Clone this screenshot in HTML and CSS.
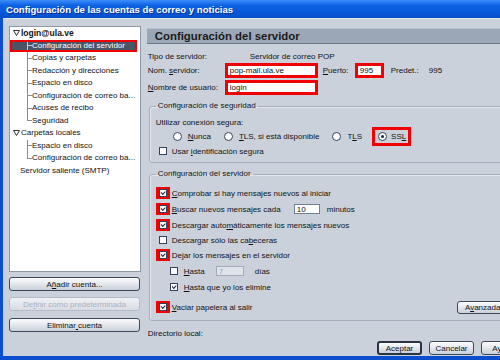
FILE: index.html
```html
<!DOCTYPE html>
<html>
<head>
  <title>Configuración de las cuentas de correo y noticias</title>
  <link rel="stylesheet" href="styles.css">
</head>
<body>
  <div class="window">
    <div class="titlebar">Configuración de las cuentas de correo y noticias</div>
    <div class="body">
      <div class="sidebar">
        <div class="tree">
          <div class="node root"><svg class="twisty" width="7" height="6"><polygon points="0.5,0.5 6.5,0.5 3.5,5.5" fill="#fff" stroke="#333"/></svg>login@ula.ve</div>
          <div class="leaf selected">Configuración del servidor</div>
          <div class="leaf">Copias y carpetas</div>
          <div class="leaf">Redacción y direcciones</div>
          <div class="leaf">Espacio en disco</div>
          <div class="leaf">Configuración de correo ba...</div>
          <div class="leaf">Acuses de recibo</div>
          <div class="leaf last">Seguridad</div>
          <div class="node"><svg class="twisty" width="7" height="6"><polygon points="0.5,0.5 6.5,0.5 3.5,5.5" fill="#fff" stroke="#333"/></svg>Carpetas locales</div>
          <div class="leaf">Espacio en disco</div>
          <div class="leaf last">Configuración de correo ba...</div>
          <div class="node plain">Servidor saliente (SMTP)</div>
        </div>
        <button class="btn side-btn first">A<u>ñ</u>adir cuenta...</button>
        <button class="btn side-btn disabled">De<u>f</u>inir como predeterminada</button>
        <button class="btn side-btn last">Eliminar<u> </u>cuenta</button>
      </div>

      <div class="main">
        <div class="page-header">Configuración del servidor</div>

        <div class="info-row">
          <span class="label type">Tipo de servidor:</span>
          <span>Servidor de correo POP</span>
        </div>
        <div class="field-row">
          <span class="label">Nom. <u>s</u>ervidor:</span>
          <span class="red-input">pop-mail.ula.ve</span>
          <span class="label port-label"><u>P</u>uerto:</span>
          <span class="red-input port">995</span>
          <span class="label predet">Predet.:</span>
          <span>995</span>
        </div>
        <div class="field-row user">
          <span class="label"><u>N</u>ombre de usuario:</span>
          <span class="red-input">login</span>
        </div>

        <fieldset class="group security">
          <legend>Configuración de seguridad</legend>
          <div class="opt-line">Utilizar conexión segura:</div>
          <div class="radios">
            <span class="radio-item"><span class="radio"></span><span><u>N</u>unca</span></span>
            <span class="radio-item"><span class="radio"></span><span><u>T</u>LS, si está disponible</span></span>
            <span class="radio-item"><span class="radio"></span><span>T<u>L</u>S</span></span>
            <span class="radio-item marked"><span class="radio on"></span><span>SS<u>L</u></span></span>
          </div>
          <div class="opt short">
            <span class="slot"><span class="cb"></span></span>
            <span>Usar <u>i</u>dentificación segura</span>
          </div>
        </fieldset>

        <fieldset class="group server">
          <legend>Configuración del servidor</legend>
          <div class="opt">
            <span class="slot red"><span class="cb on"></span></span>
            <span><u>C</u>omprobar si hay mensajes nuevos al iniciar</span>
          </div>
          <div class="opt">
            <span class="slot red"><span class="cb on"></span></span>
            <span class="every"><u>B</u>uscar nuevos mensajes cada</span>
            <span class="small-input">10</span>
            <span class="unit">minutos</span>
          </div>
          <div class="opt">
            <span class="slot red"><span class="cb on"></span></span>
            <span>Descargar auto<u>m</u>áticamente los mensajes nuevos</span>
          </div>
          <div class="opt short">
            <span class="slot"><span class="cb"></span></span>
            <span>Descargar sólo las ca<u>b</u>eceras</span>
          </div>
          <div class="opt">
            <span class="slot red"><span class="cb on"></span></span>
            <span>De<u>j</u>ar los mensajes en el servidor</span>
          </div>
          <div class="opt sub">
            <span class="slot"><span class="cb"></span></span>
            <span class="until"><u>H</u>asta</span>
            <span class="small-input off">7</span>
            <span class="unit">días</span>
          </div>
          <div class="opt sub">
            <span class="slot"><span class="cb on"></span></span>
            <span><u>H</u>asta que yo los elimine</span>
          </div>
          <div class="opt spread">
            <span class="slot red"><span class="cb on"></span></span>
            <span class="grow"><u>V</u>aciar papelera al salir</span>
            <button class="btn advanced">A<u>v</u>anzadas...</button>
          </div>
        </fieldset>

        <div class="info-row dir">Directorio local:</div>

        <div class="actions">
          <button class="btn default">Aceptar</button>
          <button class="btn">Cancelar</button>
          <button class="btn">Ayuda</button>
        </div>
      </div>
    </div>
  </div>
</body>
</html>
```

FILE: styles.css
```css
html,
body {
  margin: 0;
  padding: 0;
  overflow: hidden;
}

body {
  font-family: "Liberation Sans", Arial, sans-serif;
  font-size: 8px;
  color: #111;
  background-color: #0b4fcf;
}

.window {
  width: 535px;
  height: 360px;
  display: flex;
  flex-direction: column;
  background-color: #0b4fcf;
}

.titlebar {
  height: 18px;
  padding-left: 6px;
  display: flex;
  align-items: center;
  color: #fff;
  font-weight: bold;
  font-size: 9.6px;
  text-shadow: 1px 1px 0 #0a2f8a;
  background: linear-gradient(#3d8ef9, #0d62e4 30%, #0658da 70%, #0a4cc6);
}

.body {
  flex: 1;
  margin: 0 3px 4px 3px;
  padding: 8px 6px 0 6px;
  display: flex;
  gap: 7px;
  background-color: #cad1db;
  border-top: 1px solid #e3e8ef;
}

/* left column */

.sidebar {
  width: 132px;
  margin-top: -1px;
  display: flex;
  flex-direction: column;
}

.tree {
  height: 246px;
  box-sizing: border-box;
  background-color: #fff;
  border: 1px solid #8e99a8;
  line-height: 12.5px;
}

.node {
  padding-left: 3px;
  display: flex;
  align-items: center;
}

.node.root {
  font-weight: bold;
  font-size: 8.5px;
}

.node.plain {
  padding-left: 10px;
}

.twisty {
  margin-right: 1px;
}

.leaf {
  padding-left: 22px;
  background:
    linear-gradient(#8c8c8c, #8c8c8c) 17px 0 / 1px 100% no-repeat,
    linear-gradient(#8c8c8c, #8c8c8c) 17px 50% / 5px 1px no-repeat;
}

.leaf.last {
  background:
    linear-gradient(#8c8c8c, #8c8c8c) 17px 0 / 1px 50% no-repeat,
    linear-gradient(#8c8c8c, #8c8c8c) 17px 50% / 5px 1px no-repeat;
}

.leaf.selected {
  margin-right: 3px;
  color: #fff;
  box-shadow: inset 0 0 0 2px #f00000;
  background:
    linear-gradient(#c9ced6, #c9ced6) 17px 0 / 1px 100% no-repeat,
    linear-gradient(#c9ced6, #c9ced6) 17px 50% / 5px 1px no-repeat,
    #4b5466;
}

.btn {
  font: inherit;
  color: #111;
  height: 14px;
  padding: 0;
  border: 1px solid #3f4858;
  border-radius: 3px;
  background: linear-gradient(#fbfcfd, #e6e9ee 45%, #c9d0d9);
  cursor: pointer;
}

.side-btn {
  width: 131px;
  margin-top: 6px;
}

.side-btn.first {
  margin-top: 5px;
}

.side-btn.last {
  margin-top: 7px;
}

.side-btn.disabled {
  color: #a9b1bc;
  border-color: #b3bbc6;
  background: linear-gradient(#eef1f4, #d8dde4);
}

/* right column */

.main {
  width: 379px;
  margin-top: -1px;
  display: flex;
  flex-direction: column;
}

.page-header {
  margin-top: 2px;
  margin-left: -1px;
  height: 14px;
  padding-left: 8px;
  display: flex;
  align-items: center;
  font-weight: bold;
  font-size: 11.4px;
  color: #1b1b1b;
  background-color: #9ba7b6;
  border-top: 1px solid #b6c0cc;
  border-bottom: 1px solid #6b7787;
}

.info-row {
  margin-top: 6px;
  height: 12px;
  display: flex;
  align-items: center;
}

.label {
  width: 77px;
}

.label.type {
  width: 102px;
}

.field-row {
  margin-top: 1px;
  height: 15px;
  display: flex;
  align-items: center;
}

.field-row.user {
  margin-top: 2px;
}

.red-input {
  width: 93px;
  height: 15px;
  box-sizing: border-box;
  padding-left: 2px;
  display: flex;
  align-items: center;
  background-color: #fff;
  border: 3px solid #f00000;
}

.red-input.port {
  width: 29px;
}

.port-label {
  width: 32px;
  margin-left: 5px;
}

.predet {
  width: 38px;
  margin-left: 7px;
}

.group {
  margin: 6px 0 0 1px;
  min-width: 0;
  padding: 6px 0 5px 6px;
  border: 1px solid #a5aebb;
  border-radius: 3px;
  box-shadow: inset 1px 1px 0 #e4e8ee;
}

.group legend {
  padding: 0 2px;
  line-height: 10px;
}

.opt-line {
  height: 12px;
  line-height: 12px;
}

.radios {
  height: 14px;
  padding-left: 17px;
  display: flex;
  align-items: center;
  gap: 13px;
}

.radio-item {
  display: flex;
  align-items: center;
  gap: 6px;
}

.radio-item.marked {
  margin: -5px 0 -5px -3px;
  padding: 2px 2px 2px 3px;
  gap: 4px;
  border: 3px solid #f00000;
}

.radio {
  width: 9px;
  height: 9px;
  box-sizing: border-box;
  border: 1px solid #34435a;
  border-radius: 50%;
  background-color: #fff;
  display: flex;
  align-items: center;
  justify-content: center;
}

.radio.on::after {
  content: "";
  width: 3px;
  height: 3px;
  border-radius: 50%;
  background-color: #1a2433;
}

.opt {
  height: 16px;
  display: flex;
  align-items: center;
  gap: 2px;
}

.opt.short {
  height: 14px;
}

.security .opt.short {
  margin-top: 2px;
  height: 12px;
}

.opt.sub {
  padding-left: 14px;
  gap: 6px;
}

.opt.spread {
  margin-top: 4px;
  padding-right: 6px;
}

.slot {
  width: 14px;
  height: 12px;
  display: flex;
  align-items: center;
  justify-content: center;
}

.slot.red {
  background-color: #f00000;
}

.opt.sub .slot {
  width: 8px;
}

.cb {
  width: 8px;
  height: 8px;
  box-sizing: border-box;
  border: 1px solid #34435a;
  background-color: #fff;
}

.cb.on::after {
  content: "";
  display: block;
  width: 3px;
  height: 1.5px;
  margin: 1px 0 0 1px;
  border-left: 1.5px solid #18202c;
  border-bottom: 1.5px solid #18202c;
  transform: rotate(-45deg);
}

.every {
  width: 120px;
}

.until {
  width: 26px;
}

.small-input {
  width: 26px;
  height: 10px;
  box-sizing: border-box;
  padding-left: 2px;
  display: flex;
  align-items: center;
  background-color: #fff;
  border: 1px solid #6f7f92;
}

.small-input.off {
  width: 28px;
  color: #a3abb6;
  background-color: #dfe4ea;
  border-color: #a2abb7;
}

.unit {
  margin-left: 5px;
}

.grow {
  flex: 1;
}

.advanced {
  width: 62px;
  height: 13px;
}

.dir {
  margin-top: 6px;
}

.actions {
  margin-top: 2px;
  display: flex;
  justify-content: flex-end;
  gap: 7px;
}

.actions .btn {
  width: 45px;
}

.actions .btn.default {
  border: 2px solid #2b3240;
}
```
